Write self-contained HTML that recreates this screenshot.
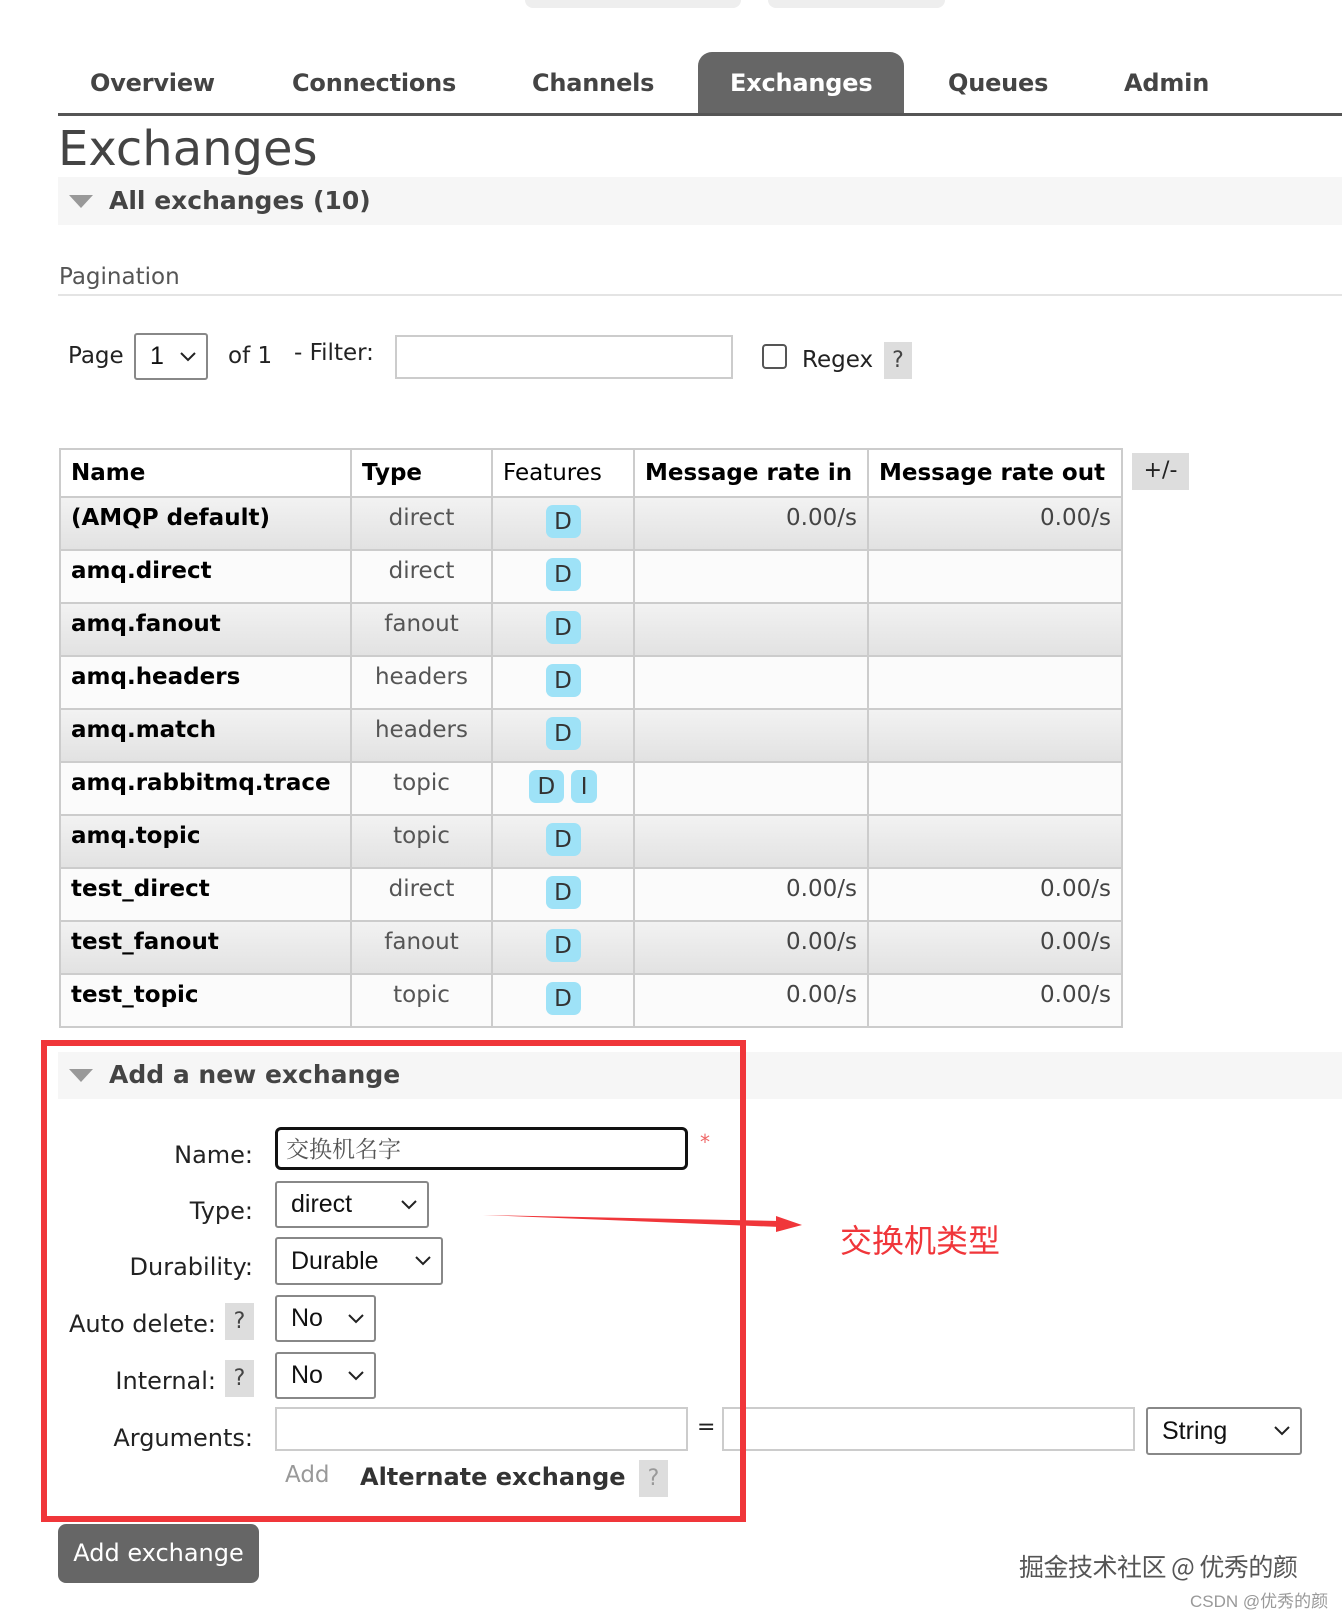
<!DOCTYPE html>
<html><head><meta charset="utf-8">
<style>
*{box-sizing:border-box;margin:0;padding:0}
body{width:1342px;height:1616px;background:#fff;position:relative;overflow:hidden;font-family:"DejaVu Sans","Liberation Sans","Noto Sans CJK SC",sans-serif;color:#222}
.a{position:absolute;white-space:nowrap}
.tab{position:absolute;top:69px;font-weight:bold;font-size:24px;color:#444;letter-spacing:-0.2px}
.sel{position:absolute;border:2px solid #888;border-radius:3px;background:#fff;font-size:25px;font-family:"Liberation Sans",sans-serif;color:#111;padding-left:14px;display:flex;align-items:center}
.sel svg{position:absolute;right:10px;top:50%;margin-top:-5px}
.inp{position:absolute;border:2px solid #ccc;background:#fff}
.q{position:absolute;background:#ddd;color:#444;font-size:22px;text-align:center}
.lbl{position:absolute;font-size:24px;color:#222;text-align:right;width:240px}
table{position:absolute;left:59px;top:448px;border-collapse:collapse;border:2px solid #ccc}
td,th{border:2px solid #ccc;height:53px;font-size:23px;padding:0 10px;vertical-align:top;padding-top:7px}
th{height:48px;text-align:left;font-weight:bold;color:#000;background:#fff;padding-top:10px}
tr.o td{background:linear-gradient(#f2f2f2,#e2e2e2)}
tr.e td{background:#fbfbfb}
td.n{font-weight:bold;color:#000}
td.t{text-align:center;color:#555}
td.f{text-align:center}
td.r{text-align:right;color:#444}
.d{display:inline-block;background:#9ee2f7;color:#333;border-radius:7px;width:35px;height:33px;line-height:34px;text-align:center;font-size:23px;margin-top:0}
</style></head><body>
<div class="a" style="left:525px;top:-10px;width:216px;height:18px;background:#eee;border-radius:8px"></div>
<div class="a" style="left:768px;top:-10px;width:177px;height:18px;background:#eee;border-radius:8px"></div>

<div class="a" style="left:698px;top:52px;width:206px;height:63px;background:#666;border-radius:14px 14px 0 0"></div>
<div class="tab" style="left:90px">Overview</div>
<div class="tab" style="left:292px">Connections</div>
<div class="tab" style="left:532px">Channels</div>
<div class="tab" style="left:730px;color:#fff">Exchanges</div>
<div class="tab" style="left:948px">Queues</div>
<div class="tab" style="left:1124px">Admin</div>
<div class="a" style="left:58px;top:113px;width:1284px;height:3px;background:#555"></div>

<div class="a" style="left:58px;top:121px;font-size:48px;color:#444">Exchanges</div>
<div class="a" style="left:58px;top:177px;width:1284px;height:48px;background:#f6f6f6"></div>
<svg class="a" style="left:69px;top:195px" width="24" height="14"><polygon points="0,0 24,0 12,13" fill="#999"/></svg>
<div class="a" style="left:109px;top:186px;font-size:25px;font-weight:bold;color:#444">All exchanges (10)</div>

<div class="a" style="left:59px;top:264px;font-size:23px;color:#555">Pagination</div>
<div class="a" style="left:58px;top:294px;width:1284px;height:2px;background:#e4e4e4"></div>

<div class="a" style="left:68px;top:343px;font-size:23px">Page</div>
<div class="sel" style="left:134px;top:333px;width:74px;height:47px">1<svg width="16" height="10"><path d="M1 1L8 8L15 1" fill="none" stroke="#222" stroke-width="2"/></svg></div>
<div class="a" style="left:228px;top:343px;font-size:23px">of 1</div>
<div class="a" style="left:294px;top:340px;font-size:23px">- Filter:</div>
<div class="inp" style="left:395px;top:335px;width:338px;height:44px"></div>
<div class="a" style="left:762px;top:344px;width:25px;height:25px;border:2px solid #555;border-radius:4px"></div>
<div class="a" style="left:802px;top:347px;font-size:23px">Regex</div>
<div class="q" style="left:884px;top:342px;width:28px;height:37px;line-height:37px">?</div>

<table>
<tr><th style="width:291px">Name</th><th style="width:141px">Type</th><th style="width:142px;font-weight:normal">Features</th><th style="width:234px">Message rate in</th><th style="width:254px">Message rate out</th></tr>
<tr class="o"><td class="n">(AMQP default)</td><td class="t">direct</td><td class="f"><span class="d">D</span></td><td class="r">0.00/s</td><td class="r">0.00/s</td></tr>
<tr class="e"><td class="n">amq.direct</td><td class="t">direct</td><td class="f"><span class="d">D</span></td><td></td><td></td></tr>
<tr class="o"><td class="n">amq.fanout</td><td class="t">fanout</td><td class="f"><span class="d">D</span></td><td></td><td></td></tr>
<tr class="e"><td class="n">amq.headers</td><td class="t">headers</td><td class="f"><span class="d">D</span></td><td></td><td></td></tr>
<tr class="o"><td class="n">amq.match</td><td class="t">headers</td><td class="f"><span class="d">D</span></td><td></td><td></td></tr>
<tr class="e"><td class="n">amq.rabbitmq.trace</td><td class="t">topic</td><td class="f"><span class="d">D</span> <span class="d" style="width:26px">I</span></td><td></td><td></td></tr>
<tr class="o"><td class="n">amq.topic</td><td class="t">topic</td><td class="f"><span class="d">D</span></td><td></td><td></td></tr>
<tr class="e"><td class="n">test_direct</td><td class="t">direct</td><td class="f"><span class="d">D</span></td><td class="r">0.00/s</td><td class="r">0.00/s</td></tr>
<tr class="o"><td class="n">test_fanout</td><td class="t">fanout</td><td class="f"><span class="d">D</span></td><td class="r">0.00/s</td><td class="r">0.00/s</td></tr>
<tr class="e"><td class="n">test_topic</td><td class="t">topic</td><td class="f"><span class="d">D</span></td><td class="r">0.00/s</td><td class="r">0.00/s</td></tr>
</table>
<div class="q" style="left:1132px;top:453px;width:57px;height:37px;line-height:36px;color:#222">+/-</div>

<div class="a" style="left:58px;top:1052px;width:1284px;height:47px;background:#f6f6f6"></div>
<svg class="a" style="left:69px;top:1069px" width="24" height="14"><polygon points="0,0 24,0 12,13" fill="#999"/></svg>
<div class="a" style="left:109px;top:1060px;font-size:25px;font-weight:bold;color:#444">Add a new exchange</div>

<div class="lbl" style="left:13px;top:1141px">Name:</div>
<div class="a" style="left:275px;top:1127px;width:413px;height:43px;border:3px solid #111;border-radius:6px;font-family:'Noto Serif CJK SC',serif;font-size:23px;color:#555;padding:1px 8px">交换机名字</div>
<div class="a" style="left:700px;top:1130px;color:#e66;font-size:20px">*</div>

<div class="lbl" style="left:13px;top:1197px">Type:</div>
<div class="sel" style="left:275px;top:1181px;width:154px;height:47px">direct<svg width="16" height="10"><path d="M1 1L8 8L15 1" fill="none" stroke="#222" stroke-width="2"/></svg></div>
<div class="lbl" style="left:13px;top:1253px">Durability:</div>
<div class="sel" style="left:275px;top:1237px;width:168px;height:48px">Durable<svg width="16" height="10"><path d="M1 1L8 8L15 1" fill="none" stroke="#222" stroke-width="2"/></svg></div>
<div class="lbl" style="left:-24px;top:1310px">Auto delete:</div>
<div class="q" style="left:225px;top:1303px;width:29px;height:37px;line-height:38px">?</div>
<div class="sel" style="left:275px;top:1295px;width:101px;height:47px">No<svg width="16" height="10"><path d="M1 1L8 8L15 1" fill="none" stroke="#222" stroke-width="2"/></svg></div>
<div class="lbl" style="left:-24px;top:1367px">Internal:</div>
<div class="q" style="left:225px;top:1360px;width:29px;height:37px;line-height:38px">?</div>
<div class="sel" style="left:275px;top:1352px;width:101px;height:47px">No<svg width="16" height="10"><path d="M1 1L8 8L15 1" fill="none" stroke="#222" stroke-width="2"/></svg></div>
<div class="lbl" style="left:13px;top:1424px">Arguments:</div>
<div class="inp" style="left:275px;top:1407px;width:413px;height:44px"></div>
<div class="a" style="left:697px;top:1415px;font-size:22px">=</div>
<div class="inp" style="left:722px;top:1407px;width:413px;height:44px"></div>
<div class="sel" style="left:1146px;top:1407px;width:156px;height:48px">String<svg width="16" height="10"><path d="M1 1L8 8L15 1" fill="none" stroke="#222" stroke-width="2"/></svg></div>
<div class="a" style="left:285px;top:1462px;font-size:23px;color:#999">Add</div>
<div class="a" style="left:360px;top:1463px;font-size:24px;font-weight:bold;color:#333">Alternate exchange</div>
<div class="q" style="left:639px;top:1460px;width:29px;height:37px;line-height:38px;color:#999">?</div>

<div class="a" style="left:41px;top:1040px;width:705px;height:482px;border:6px solid #f0363a"></div>

<svg class="a" style="left:480px;top:1205px" width="330" height="30"><path d="M3 10L300 16L300 22Z" fill="#f0363a"/><polygon points="296,11 322,20 296,27" fill="#f0363a"/></svg>
<div class="a" style="left:840px;top:1216px;font-size:32px;color:#f0363a;font-family:'Noto Sans CJK SC',sans-serif">交换机类型</div>

<div class="a" style="left:58px;top:1524px;width:201px;height:59px;background:#666;border-radius:8px;color:#fff;font-size:24px;line-height:58px;text-align:center">Add exchange</div>

<div class="a" style="left:1019px;top:1548px;font-size:25px;color:#555;font-family:'Noto Sans CJK SC',sans-serif;letter-spacing:-0.5px">掘金技术社区 @ 优秀的颜</div>
<div class="a" style="left:1190px;top:1587px;font-size:17px;color:#999;font-family:'Liberation Sans','Noto Sans CJK SC',sans-serif">CSDN @优秀的颜</div>
</body></html>
